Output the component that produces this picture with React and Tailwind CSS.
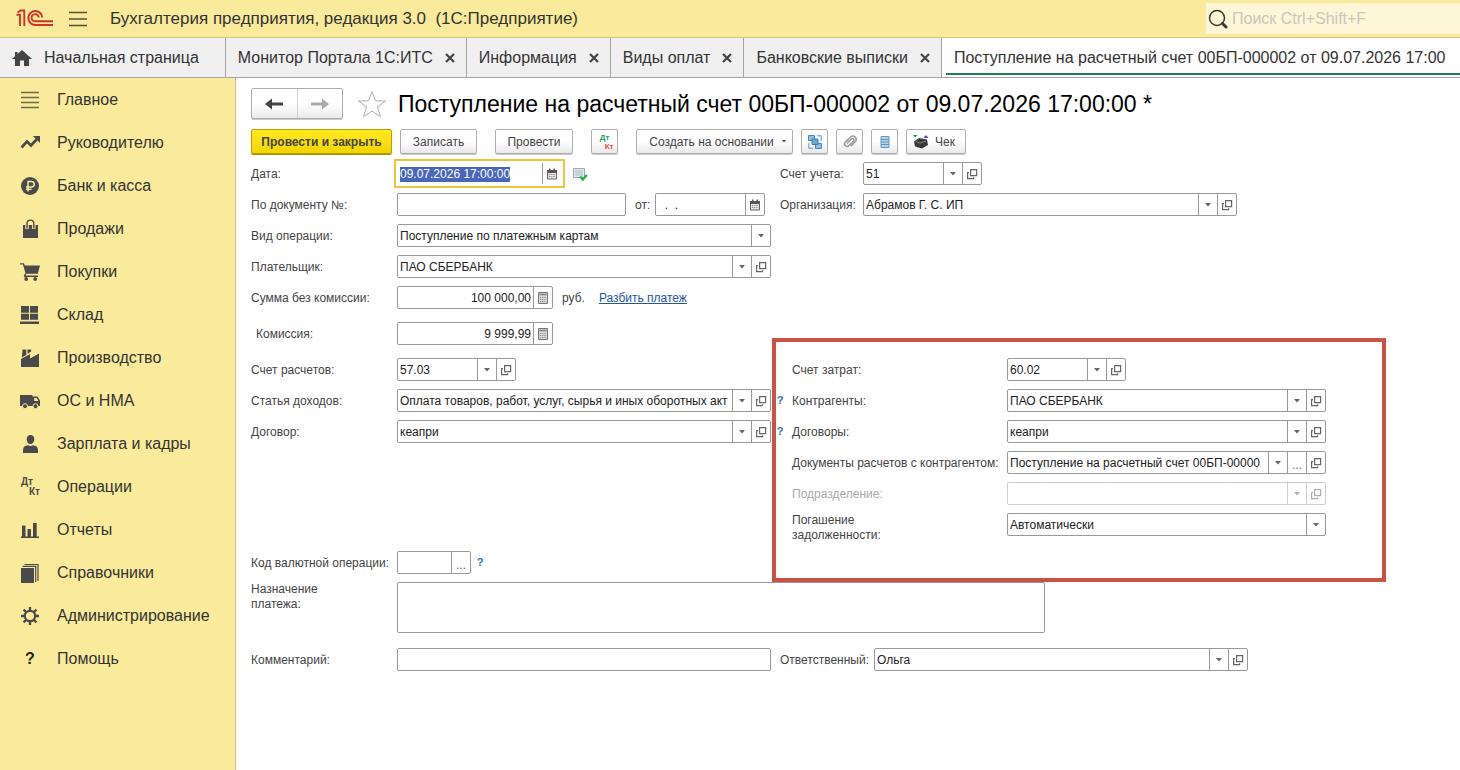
import React, { useEffect, useRef } from "react";
import clsx from "clsx";

const sections = [
  { title: "Главное", icon: "main" },
  { title: "Руководителю", icon: "trend" },
  { title: "Банк и касса", icon: "ruble" },
  { title: "Продажи", icon: "bag" },
  { title: "Покупки", icon: "cart" },
  { title: "Склад", icon: "boxes" },
  { title: "Производство", icon: "factory" },
  { title: "ОС и НМА", icon: "truck" },
  { title: "Зарплата и кадры", icon: "person" },
  { title: "Операции", icon: "dtkt" },
  { title: "Отчеты", icon: "chart" },
  { title: "Справочники", icon: "books" },
  { title: "Администрирование", icon: "gear" },
  { title: "Помощь", icon: "help" },
];

const tabs = ["Монитор Портала 1С:ИТС", "Информация", "Виды оплат", "Банковские выписки"];

const drawings = {
  main: (
    <path d="M1 2.5h18M1 7.5h18M1 12.5h18M1 17.5h18" stroke="#6f6a4e" strokeWidth="1.4" />
  ),
  trend: (
    <>
      <path d="M1.5 14.5 7 8.5l4 4 6-6.5" fill="none" stroke="#4a4a4a" strokeWidth="2.6" />
      <path d="M13 3h7v7z" fill="#4a4a4a" />
    </>
  ),
  ruble: (
    <>
      <circle cx="10" cy="10" r="9" fill="#4a4a4a" />
      <path
        d="M8 15.5V5.5h3.5a2.6 2.6 0 0 1 0 5.4H6M6 13.2h5.5"
        fill="none"
        stroke="#f9eb9b"
        strokeWidth="1.5"
      />
    </>
  ),
  bag: (
    <>
      <path d="M3 6h15v13H3z" fill="#4a4a4a" />
      <path d="M7 10V4.5a3.4 3.4 0 0 1 6.8 0V10" fill="none" stroke="#f9eb9b" strokeWidth="3.4" />
      <path d="M7 9.5V4.5a3.4 3.4 0 0 1 6.8 0v5" fill="none" stroke="#4a4a4a" strokeWidth="1.4" />
    </>
  ),
  cart: (
    <>
      <path d="M0 1.2h4l.8 2.3H20l-2.2 8.2H5.6L3 2.6H0z" fill="#4a4a4a" />
      <path d="M5.5 11.5 4.7 14.2H18" fill="none" stroke="#4a4a4a" strokeWidth="1.4" />
      <circle cx="6.2" cy="17" r="1.9" fill="#4a4a4a" />
      <circle cx="15.2" cy="17" r="1.9" fill="#4a4a4a" />
    </>
  ),
  boxes: (
    <path d="M1 1h8v6.7H1zM10 1h8v6.7h-8zM1 8.7h8v6H1zM10 8.7h8v6h-8zM0 16.5h19V19H0z" fill="#4a4a4a" />
  ),
  factory: (
    <path
      d="M1 19V11l9-5v4.500L19 5.500V19zM2.500 1.500h3.800v5.500L1.800 9.500zM7.500 1.500h3.700V3.500L7.500 5.800z"
      fill="#4a4a4a"
    />
  ),
  truck: (
    <>
      <path d="M0 4h12.500v11H0z" fill="#4a4a4a" />
      <path
        d="M12 5.500h5.500l2.500 4V15h-8zM14.300 7v3h4.100l-1.700-3z"
        fill="#4a4a4a"
        fillRule="evenodd"
      />
      <circle cx="5" cy="15.200" r="2.500" fill="#4a4a4a" stroke="#f9eb9b" />
      <circle cx="15.500" cy="15.200" r="2.500" fill="#4a4a4a" stroke="#f9eb9b" />
    </>
  ),
  person: (
    <path
      d="M10.500 1c2.400 0 3.800 1.700 3.800 4.200S12.700 10 10.500 10 6.700 7.700 6.700 5.200 8.100 1 10.500 1zM3 19v-3c0-3 2-4.600 5-4.800 1.500 1 3.500 1 5 0 3 .2 5 1.800 5 4.800v3z"
      fill="#4a4a4a"
    />
  ),
  chart: (
    <path d="M2 5.500h3.500V17H2zM7.500 9h3.500V17H7.500zM13 3h3.700v14H13zM1 16.500h18V18H1z" fill="#4a4a4a" />
  ),
  books: (
    <>
      <path d="M1 5h13v15H1z" fill="#4a4a4a" />
      <path d="M2.500 3.300h13.200V19M4.500 1.500h13.500V18" fill="none" stroke="#4a4a4a" strokeWidth="1.200" />
    </>
  ),
  gear: (
    <>
      <circle cx="10" cy="10" r="5.200" fill="none" stroke="#4a4a4a" strokeWidth="2.200" />
      <path
        d="M10 1v3.500M10 15.500V19M1 10h3.500M15.500 10H19M3.600 3.600 6 6M14 14l2.400 2.400M3.600 16.400 6 14M14 6l2.400-2.400"
        stroke="#4a4a4a"
        strokeWidth="2.400"
      />
    </>
  ),
};

function SectionIcon({ name }) {
  if (name === "dtkt") {
    return (
      <span className="flex w-5 flex-col pl-px text-[10px] font-bold leading-[10px] text-[#4a4a4a]">
        <span>Дт</span>
        <span className="self-end">Кт</span>
      </span>
    );
  }
  if (name === "help") {
    return <span className="w-5 text-center text-base font-bold text-[#222]">?</span>;
  }
  return (
    <svg viewBox="0 0 20 20" className="h-5 w-5 shrink-0" aria-hidden="true">
      {drawings[name]}
    </svg>
  );
}

function Logo() {
  return (
    <svg viewBox="0 0 38 20" className="h-5 w-[38px]" fill="none" stroke="#d0342a" aria-label="1С">
      <path d="M1.500 5.800H5V17M2.500 3.500 5.500 1.500h3.800V17" strokeWidth="1.900" />
      <path d="M27.300 8.500A7 7 0 1 0 20.200 16H38" strokeWidth="2" />
      <path d="M23.800 8.500A3.600 3.600 0 1 0 20.200 12.300H38" strokeWidth="1.900" />
    </svg>
  );
}

function ArrowIcon({ className }) {
  return (
    <svg viewBox="0 0 18 12" className={clsx("h-3 w-[18px]", className)} fill="currentColor" aria-hidden="true">
      <path d="M0 6 7 .5v4h11v3H7v4z" />
    </svg>
  );
}

function CalendarIcon() {
  return (
    <svg viewBox="0 0 12 12" className="h-3 w-3" aria-hidden="true">
      <path d="M1.500 2.500h9v8.500h-9z" fill="#e4e4e4" stroke="#666" />
      <path d="M1 2h10v3H1zM3 .5h1.500V3H3zM7.500.5H9V3H7.500z" fill="#555" />
      <path d="M3 6.500h6.500M3 8.500h6.500" stroke="#888" strokeDasharray="1.200 1" />
    </svg>
  );
}

function CalculatorIcon() {
  return (
    <svg viewBox="0 0 12 12" className="h-3 w-3" aria-hidden="true">
      <path d="M1.500.5h9v11h-9z" fill="#d8d8d8" stroke="#777" />
      <path d="M2.500 2.500h7" stroke="#808080" strokeWidth="1.500" />
      <path d="M3 5.500h6.500M3 7.500h6.500M3 9.500h6.500" stroke="#8a8a8a" strokeDasharray="1.200 1" />
    </svg>
  );
}

const fieldIcons = {
  list: (
    <svg viewBox="0 0 6 4" className="h-1 w-1.5" fill="currentColor" aria-hidden="true">
      <path d="M0 0h6L3 3.500z" />
    </svg>
  ),
  open: (
    <svg viewBox="0 0 12 12" className="h-3 w-3" fill="none" stroke="currentColor" strokeWidth="1.200" aria-hidden="true">
      <path d="M4.600 1.600h6v6h-6z" />
      <path d="M3 4.600H1.600v6h6V9.200" />
    </svg>
  ),
  more: <span className="pt-1 leading-none">...</span>,
  calendar: <CalendarIcon />,
  calculator: <CalculatorIcon />,
};

const fieldTitles = {
  list: "Выбрать из списка",
  open: "Открыть",
  more: "Выбрать",
  calendar: "Календарь",
  calculator: "Калькулятор",
};

function Field({ id, value = "", buttons = [], className, right, disabled, inputRef, active }) {
  return (
    <div
      className={clsx(
        "flex h-[23px] min-w-0 border bg-white",
        active ? "border-white outline-2 outline-offset-1 outline-[#edc53c]" : "rounded-xs",
        !active && (disabled ? "border-[#cfcfcf]" : "border-[#999]"),
        className
      )}
    >
      <input
        id={id}
        ref={inputRef}
        defaultValue={value}
        disabled={disabled}
        className={clsx(
          "w-full min-w-0 flex-1 px-0.5 pt-0.5 leading-[15px] text-[#222] outline-none selection:bg-[#4a66ba] selection:text-white",
          right && "text-right"
        )}
      />
      {buttons.map((name) => (
        <button
          key={name}
          type="button"
          disabled={disabled}
          aria-label={fieldTitles[name]}
          className={clsx(
            "flex w-[19px] shrink-0 items-center justify-center border-l",
            disabled ? "border-[#cfcfcf] text-[#b0b0b0]" : "border-[#999] text-[#666]"
          )}
        >
          {fieldIcons[name]}
        </button>
      ))}
    </div>
  );
}

function SelectField({ id, value, className }) {
  return (
    <div className={clsx("relative flex h-[23px] min-w-0 rounded-xs border border-[#999] bg-white", className)}>
      <select id={id} className="w-full appearance-none px-0.5 text-[#222] outline-none">
        <option>{value}</option>
      </select>
      <span className="pointer-events-none absolute inset-y-0 right-0 flex w-[19px] items-center justify-center border-l border-[#999] text-[#666]">
        {fieldIcons.list}
      </span>
    </div>
  );
}

function Label({ htmlFor, className, children }) {
  return (
    <label htmlFor={htmlFor} className={clsx("shrink-0 whitespace-nowrap", className)}>
      {children}
    </label>
  );
}

function Hint() {
  return (
    <button type="button" className="ml-[5px] w-2 shrink-0 text-[11px] font-bold text-[#1a78b4]">
      ?
    </button>
  );
}

function ToolButton({ className, children, ...rest }) {
  return (
    <button
      type="button"
      className={clsx(
        "flex h-[25px] shrink-0 items-center justify-center whitespace-nowrap rounded-xs border border-[#adadad] bg-linear-to-b from-white from-50% to-[#e9e9e9] shadow-[0_1px_0_#ccc]",
        className
      )}
      {...rest}
    >
      {children}
    </button>
  );
}

function Header() {
  return (
    <header className="flex h-[38px] items-center border-b border-[#d6c671] bg-[#f9eb9b] pl-[15px]">
      <Logo />
      <button type="button" aria-label="Меню" className="ml-4">
        <svg viewBox="0 0 18 16" className="h-4 w-[18px]" stroke="#55503a" strokeWidth="1.500" aria-hidden="true">
          <path d="M0 1.500h18M0 8h18M0 14.500h18" />
        </svg>
      </button>
      <h1 className="ml-[23px] whitespace-pre text-[17px] text-[#333]">
        Бухгалтерия предприятия, редакция 3.0  (1С:Предприятие)
      </h1>
      <label className="ml-auto flex h-[31px] w-[254px] items-center gap-1 bg-[#fdf6d7] pl-0.5">
        <svg viewBox="0 0 20 20" className="h-5 w-5 shrink-0" fill="none" stroke="#3c3a30" aria-hidden="true">
          <circle cx="9" cy="9" r="7.500" strokeWidth="1.500" />
          <path d="m14.500 14.500 3.500 3.500" strokeWidth="3" strokeLinecap="round" />
        </svg>
        <input
          type="search"
          placeholder="Поиск Ctrl+Shift+F"
          className="min-w-0 flex-1 text-base outline-none placeholder:text-[#c9c6bb]"
        />
      </label>
    </header>
  );
}

function TabBar() {
  return (
    <nav className="flex h-10 border-b border-[#a3a3a3] bg-[#f0f0f0] text-base text-[#333]">
      <a href="#home" className="flex shrink-0 items-center gap-3 border-r border-[#a3a3a3] pl-3 pr-[26px]">
        <svg viewBox="0 0 20 18" className="h-[18px] w-5" fill="#444" aria-hidden="true">
          <path d="M10 1 20 10h-3v7h-5v-5.500H8V17H3v-7H0L3 7.300V3h2.500v2z" />
        </svg>
        Начальная страница
      </a>
      {tabs.map((tab) => (
        <div key={tab} className="flex shrink-0 items-center gap-3 border-r border-[#a3a3a3] pl-3 pr-[11px]">
          <a href="#tab">{tab}</a>
          <button type="button" aria-label="Закрыть">
            <svg viewBox="0 0 10 10" className="h-2.5 w-2.5" stroke="#444" strokeWidth="2.200" aria-hidden="true">
              <path d="m1 1 8 8M9 1 1 9" />
            </svg>
          </button>
        </div>
      ))}
      <div className="flex min-w-0 flex-1 overflow-hidden bg-white pb-0.5 pl-1">
        <a href="#tab" className="flex flex-1 items-center whitespace-nowrap border-b-2 border-[#1f8057] pl-2 pt-1">
          Поступление на расчетный счет 00БП-000002 от 09.07.2026 17:00
        </a>
      </div>
    </nav>
  );
}

function Sidebar() {
  return (
    <aside className="w-[236px] shrink-0 border-r border-[#c4bf9c] bg-[#f9eb9b]">
      {sections.map((item) => (
        <a key={item.title} href="#section" className="flex h-[43px] items-center gap-[17px] pl-5 text-base text-[#333]">
          <SectionIcon name={item.icon} />
          {item.title}
        </a>
      ))}
    </aside>
  );
}

function Toolbar() {
  return (
    <div className="mt-2.5 flex flex-wrap items-center gap-2 text-[#444]">
      <button
        type="button"
        className="h-[25px] w-[141px] shrink-0 whitespace-nowrap rounded-xs border border-[#b8a000] bg-linear-to-b from-[#ffea1e] to-[#f3d400] font-bold shadow-[0_1px_0_#a89400]"
      >
        Провести и закрыть
      </button>
      <ToolButton className="w-[77px]">Записать</ToolButton>
      <ToolButton className="ml-2.5 w-[78px]">Провести</ToolButton>
      <ToolButton className="ml-2.5 w-[27px]">
        <span className="flex w-[18px] flex-col text-[8px] font-bold leading-[9px]">
          <span className="text-[#2c9a60]">Дт</span>
          <span className="self-end text-[#dc5050]">Кт</span>
        </span>
      </ToolButton>
      <ToolButton className="ml-2.5 w-[157px] gap-2 pl-1.5">
        Создать на основании
        <svg viewBox="0 0 4 3" className="h-[3px] w-1" fill="#444" aria-hidden="true">
          <path d="M0 0h4L2 2.500z" />
        </svg>
      </ToolButton>
      <ToolButton className="w-[27px]" aria-label="Структура подчиненности">
        <svg viewBox="0 0 14 14" className="h-3.5 w-3.5" aria-hidden="true">
          <path d="M.5.500h6v5h-6zM7.500 8.500h6v5h-6z" fill="#8fc0e2" stroke="#4a88bb" />
          <path d="M4 4h6v5.500H4z" fill="#6ea8d4" stroke="#3f7fb5" />
          <path d="M9 .8h4.200V6M.8 8v5.200H5" fill="none" stroke="#5b94c2" />
        </svg>
      </ToolButton>
      <ToolButton className="w-[27px]" aria-label="Присоединенные файлы">
        <svg viewBox="0 0 14 14" className="h-3.5 w-3.5" fill="none" stroke="#999" strokeWidth="1.500" aria-hidden="true">
          <path d="M4 8.500 8.500 4a1.300 1.300 0 0 1 2 2L6 10.600a2.500 2.500 0 0 1-3.700-3.500L7.500 2.200a3.200 3.200 0 0 1 4.700 4.500L8 11" />
        </svg>
      </ToolButton>
      <ToolButton className="w-[27px]" aria-label="Реестр">
        <svg viewBox="0 0 10 14" className="h-3.5 w-2.5" aria-hidden="true">
          <path d="M1 1.500h8v11H1z" fill="#b4d2ea" stroke="#6497c0" />
          <path d="M1 4.500h8M1 7h8M1 9.500h8" stroke="#6497c0" />
        </svg>
      </ToolButton>
      <ToolButton className="w-[60px] gap-1.5 pr-1">
        <svg viewBox="0 0 16 16" className="h-4 w-4" aria-hidden="true">
          <path d="M1 7.500 6 4l8 1.500 1 5.500-6 3.500-7-2z" fill="#3a3a3a" />
          <path d="m3 7.500 4 1.500 6-2" fill="none" stroke="#888" />
          <path d="M0 1h4.500L2.300 3.500z" fill="#1e9a4c" />
          <path d="M10.500 4h5L13 1z" fill="#3c55b0" />
        </svg>
        Чек
      </ToolButton>
    </div>
  );
}

function PaymentForm() {
  const dateRef = useRef(null);

  useEffect(() => {
    dateRef.current.focus();
    dateRef.current.select();
  }, []);

  return (
    <form className="mt-2 flex flex-col gap-2 text-[#444]">
      <div className="flex gap-[9px]">
        <div className="flex w-full max-w-[520px] items-center">
          <Label htmlFor="date" className="w-[146px]">Дата:</Label>
          <Field id="date" value="09.07.2026 17:00:00" buttons={["calendar"]} className="w-[165px]" inputRef={dateRef} active />
          <svg viewBox="0 0 16 16" className="ml-2.5 h-4 w-4" aria-hidden="true">
            <path d="M1.500 2.500h11v9h-11z" fill="#e4ebef" stroke="#9babb5" />
            <path d="M3 5h8M3 7h8M3 9h8" stroke="#a9bac4" />
            <path d="m8 10.500 2.800 3 4-4.500" fill="none" stroke="#2fae4a" strokeWidth="2.400" />
          </svg>
        </div>
        <div className="flex flex-1 items-center">
          <Label htmlFor="account" className="w-[83px]">Счет учета:</Label>
          <Field id="account" value="51" buttons={["list", "open"]} className="w-[119px]" />
        </div>
      </div>

      <div className="flex gap-[9px]">
        <div className="flex w-full max-w-[520px] items-center">
          <Label htmlFor="doc" className="w-[146px]">По документу №:</Label>
          <Field id="doc" className="w-[229px]" />
          <Label htmlFor="docDate" className="ml-[9px] w-5">от:</Label>
          <Field id="docDate" value="  .  ." buttons={["calendar"]} className="w-[110px]" />
        </div>
        <div className="flex flex-1 items-center">
          <Label htmlFor="org" className="w-[83px]">Организация:</Label>
          <Field id="org" value="Абрамов Г. С. ИП" buttons={["list", "open"]} className="w-full max-w-[374px]" />
        </div>
      </div>

      <div className="flex max-w-[520px] items-center">
        <Label htmlFor="kind" className="w-[146px]">Вид операции:</Label>
        <SelectField id="kind" value="Поступление по платежным картам" className="flex-1" />
      </div>

      <div className="flex max-w-[520px] items-center">
        <Label htmlFor="payer" className="w-[146px]">Плательщик:</Label>
        <Field id="payer" value="ПАО СБЕРБАНК" buttons={["list", "open"]} className="flex-1" />
      </div>

      <div className="flex max-w-[520px] items-center">
        <Label htmlFor="sum" className="w-[146px]">Сумма без комиссии:</Label>
        <Field id="sum" value="100 000,00" buttons={["calculator"]} className="w-[156px]" right />
        <span className="ml-[9px]">руб.</span>
        <a href="#split" className="ml-3.5 text-[#2257a0] underline">Разбить платеж</a>
      </div>

      <div className="my-[5px] flex max-w-[520px] items-center">
        <Label htmlFor="fee" className="w-[146px] pl-[5px]">Комиссия:</Label>
        <Field id="fee" value="9 999,99" buttons={["calculator"]} className="w-[156px]" right />
      </div>

      <div className="flex">
        <div className="flex w-full max-w-[541px] flex-col gap-2">
          <div className="flex items-center">
            <Label htmlFor="settle" className="w-[146px]">Счет расчетов:</Label>
            <Field id="settle" value="57.03" buttons={["list", "open"]} className="w-[119px]" />
          </div>
          <div className="flex items-center pr-2">
            <Label htmlFor="income" className="w-[146px]">Статья доходов:</Label>
            <Field id="income" value="Оплата товаров, работ, услуг, сырья и иных оборотных акт" buttons={["list", "open"]} className="flex-1" />
            <Hint />
          </div>
          <div className="flex items-center pr-2">
            <Label htmlFor="contract" className="w-[146px]">Договор:</Label>
            <Field id="contract" value="кеапри" buttons={["list", "open"]} className="flex-1" />
            <Hint />
          </div>
        </div>

        <div className="relative w-full max-w-[534px]">
          {/* Highlight frame around the cost fields */}
          <div className="pointer-events-none absolute -bottom-[39px] -left-5 -right-[60px] -top-5 border-4 border-[#cb5147]" />
          <div className="flex flex-col gap-2">
            <div className="flex items-center">
              <Label htmlFor="cost" className="w-[215px]">Счет затрат:</Label>
              <Field id="cost" value="60.02" buttons={["list", "open"]} className="w-[119px]" />
            </div>
            <div className="flex items-center">
              <Label htmlFor="partner" className="w-[215px]">Контрагенты:</Label>
              <Field id="partner" value="ПАО СБЕРБАНК" buttons={["list", "open"]} className="flex-1" />
            </div>
            <div className="flex items-center">
              <Label htmlFor="contracts" className="w-[215px]">Договоры:</Label>
              <Field id="contracts" value="кеапри" buttons={["list", "open"]} className="flex-1" />
            </div>
            <div className="flex items-center">
              <Label htmlFor="docs" className="w-[215px]">Документы расчетов с контрагентом:</Label>
              <Field id="docs" value="Поступление на расчетный счет 00БП-00000" buttons={["list", "more", "open"]} className="flex-1" />
            </div>
            <div className="flex items-center">
              <Label htmlFor="dept" className="w-[215px] text-[#aaa]">Подразделение:</Label>
              <Field id="dept" buttons={["list", "open"]} className="flex-1" disabled />
            </div>
            <div className="flex items-start">
              <Label htmlFor="repay" className="w-[215px] leading-[15px]">
                Погашение
                <br />
                задолженности:
              </Label>
              <SelectField id="repay" value="Автоматически" className="flex-1" />
            </div>
          </div>
        </div>
      </div>

      <div className="flex items-center">
        <Label htmlFor="currency" className="w-[146px]">Код валютной операции:</Label>
        <Field id="currency" buttons={["more"]} className="w-[74px]" />
        <Hint />
      </div>

      <div className="flex max-w-[794px] items-start">
        <Label htmlFor="purpose" className="w-[146px] leading-[15px]">
          Назначение
          <br />
          платежа:
        </Label>
        <textarea id="purpose" className="h-[51px] flex-1 resize-none rounded-xs border border-[#999] px-0.5 text-[#222] outline-none" />
      </div>

      <div className="mt-[7px] flex gap-[9px]">
        <div className="flex w-full max-w-[520px] items-center">
          <Label htmlFor="comment" className="w-[146px]">Комментарий:</Label>
          <Field id="comment" className="flex-1" />
        </div>
        <div className="flex flex-1 items-center">
          <Label htmlFor="manager" className="w-[94px]">Ответственный:</Label>
          <Field id="manager" value="Ольга" buttons={["list", "open"]} className="w-full max-w-[374px]" />
        </div>
      </div>
    </form>
  );
}

function App() {
  return (
    <div className="flex min-h-screen flex-col overflow-hidden bg-white font-['Liberation_Sans',Arial,sans-serif]">
      <Header />
      <TabBar />
      <div className="flex flex-1">
        <Sidebar />
        <main className="min-w-0 flex-1 pl-[15px] pt-2.5 text-[12px]">
          <div className="flex items-center">
            <div className="flex h-[31px] w-[92px] rounded-xs border border-[#adadad] bg-linear-to-b from-white from-50% to-[#ebebeb] shadow-[0_1px_0_#ccc]">
              <button type="button" aria-label="Назад" className="flex flex-1 items-center justify-center border-r border-[#d0d0d0] text-[#444]">
                <ArrowIcon />
              </button>
              <button type="button" aria-label="Вперед" className="flex flex-1 items-center justify-center text-[#aaa]">
                <ArrowIcon className="rotate-180" />
              </button>
            </div>
            <button type="button" aria-label="В избранное" className="ml-3.5">
              <svg viewBox="0 0 30 28" className="h-7 w-[30px]" fill="#fff" stroke="#a9b0b0" aria-hidden="true">
                <path d="m15 1.500 3.400 9.300 10.200.2-8.100 6 2.900 9.700L15 21l-8.400 5.700L9.500 17l-8.100-6 10.200-.2z" />
              </svg>
            </button>
            <h2 className="ml-[11px] whitespace-nowrap text-[23px] leading-7 text-black">
              Поступление на расчетный счет 00БП-000002 от 09.07.2026 17:00:00 *
            </h2>
          </div>
          <Toolbar />
          <PaymentForm />
        </main>
      </div>
    </div>
  );
}

export default App;
